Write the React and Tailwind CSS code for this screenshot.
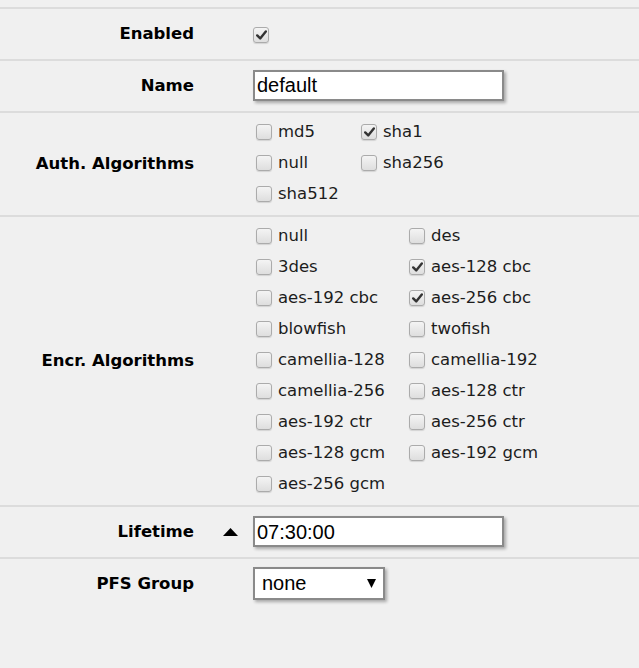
import React from "react";

const labelFont = { fontFamily: '"DejaVu Sans", Verdana, sans-serif' };

function Check({ checked }) {
  return (
    <span className="relative inline-flex h-[16px] w-[16px] shrink-0 items-center justify-center rounded-[3px] border border-[#ababab] bg-gradient-to-b from-[#f4f4f4] to-[#dedede] shadow-[0_1px_1px_rgba(0,0,0,0.12)]">
      {checked && (
        <svg width="11" height="10" viewBox="0 0 11 10" className="block">
          <path d="M1.2 5.4 L4.2 8.4 L9.8 1.4" fill="none" stroke="#333" strokeWidth="2.4" strokeLinecap="round" strokeLinejoin="round" />
        </svg>
      )}
    </span>
  );
}

function Item({ label, checked }) {
  return (
    <div className="flex h-[31px] items-center gap-[6px]">
      <Check checked={checked} />
      <span className="text-[16.5px] leading-none text-[#1c1c1c] whitespace-nowrap" style={labelFont}>{label}</span>
    </div>
  );
}

function Row({ label, children, extra, className = "h-[52px]" }) {
  return (
    <div className={`flex items-center border-b-2 border-[#dcdcdc] ${className}`}>
      <div className="w-[194px] shrink-0 text-right text-[16.5px] font-bold text-black" style={labelFont}>
        {label}
      </div>
      <div className="flex w-[59px] shrink-0 justify-end pr-[15px]">{extra}</div>
      <div className="flex-1">{children}</div>
    </div>
  );
}

const inputCls =
  "flex items-center h-[31px] border-2 border-[#8a8a8a] bg-white shadow-[2px_2px_3px_rgba(0,0,0,0.3)] text-[20px] text-black leading-none";
const inputFont = { fontFamily: '"Liberation Sans", Arial, sans-serif' };

export default function App() {
  const auth = [
    ["md5", false],
    ["sha1", true],
    ["null", false],
    ["sha256", false],
    ["sha512", false],
  ];
  const encr = [
    ["null", false],
    ["des", false],
    ["3des", false],
    ["aes-128 cbc", true],
    ["aes-192 cbc", false],
    ["aes-256 cbc", true],
    ["blowfish", false],
    ["twofish", false],
    ["camellia-128", false],
    ["camellia-192", false],
    ["camellia-256", false],
    ["aes-128 ctr", false],
    ["aes-192 ctr", false],
    ["aes-256 ctr", false],
    ["aes-128 gcm", false],
    ["aes-192 gcm", false],
    ["aes-256 gcm", false],
  ];
  return (
    <div className="min-h-[668px] w-[639px] bg-[#f0f0f0]">
      <div className="h-[9px] border-b-2 border-[#dcdcdc]" />
      <Row label="Enabled">
        <div className="-mt-[1px]">
          <Check checked />
        </div>
      </Row>
      <Row label="Name">
        <div className={`${inputCls} -mt-[2px] w-[251px] pl-[2px]`} style={inputFont}>default</div>
      </Row>
      <Row label="Auth. Algorithms" className="h-[104px]">
        <div className="ml-[3px] grid grid-cols-[105px_auto] pb-[2px]">
          {auth.map(([l, c]) => (
            <Item key={l} label={l} checked={c} />
          ))}
        </div>
      </Row>
      <Row label="Encr. Algorithms" className="h-[290px]">
        <div className="ml-[3px] grid grid-cols-[153px_auto] pb-[2px]">
          {encr.map(([l, c]) => (
            <Item key={l} label={l} checked={c} />
          ))}
        </div>
      </Row>
      <Row
        label="Lifetime"
        extra={
          <svg width="15" height="8" viewBox="0 0 15 8" className="block">
            <polygon points="7.5,0 15,8 0,8" fill="#000" />
          </svg>
        }
      >
        <div className={`${inputCls} -mt-[1px] w-[251px] pl-[2px]`} style={inputFont}>07:30:00</div>
      </Row>
      <div className="flex h-[50px] items-center">
        <div className="w-[194px] shrink-0 text-right text-[16.5px] font-bold text-black" style={labelFont}>
          PFS Group
        </div>
        <div className="w-[59px] shrink-0" />
        <div className={`${inputCls} -mt-[2px] h-[33px] w-[132px] justify-between pl-[7px] pr-[7px]`} style={inputFont}>
          <span>none</span>
          <svg width="9" height="9" viewBox="0 0 9 9" className="block">
            <polygon points="0,0 9,0 4.5,9" fill="#000" />
          </svg>
        </div>
      </div>
    </div>
  );
}
